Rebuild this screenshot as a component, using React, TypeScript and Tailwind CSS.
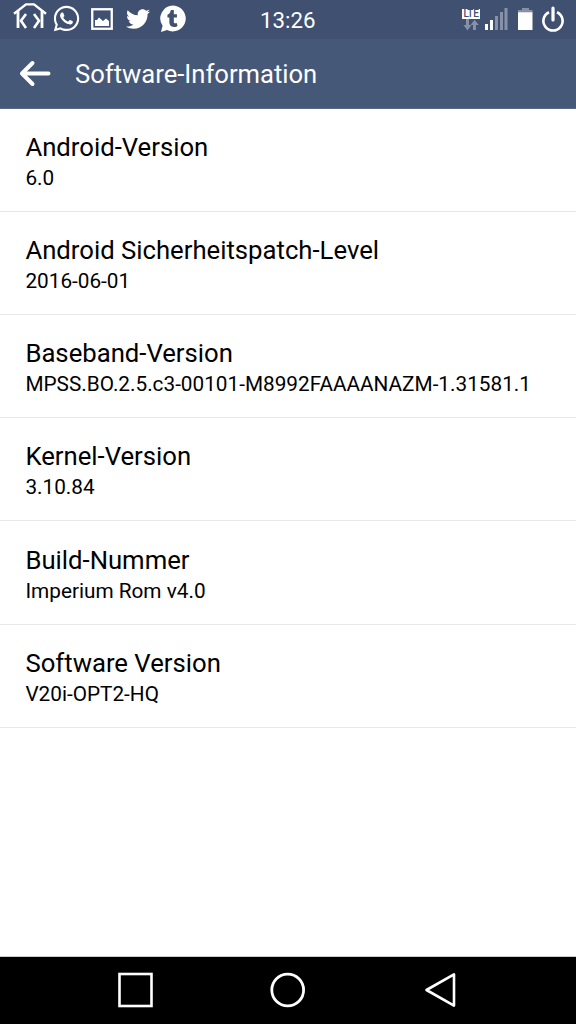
import React from "react";
import { FaTumblr, FaTwitter, FaWhatsapp } from "react-icons/fa";

const infoItems = [
    { title: "Android-Version", value: "6.0", size: "h-[103px] pt-[22px]" },
    { title: "Android Sicherheitspatch-Level", value: "2016-06-01", size: "h-[103px] pt-[22px]" },
    { title: "Baseband-Version", value: "MPSS.BO.2.5.c3-00101-M8992FAAAANAZM-1.31581.1", size: "h-[103px] pt-[22px]" },
    { title: "Kernel-Version", value: "3.10.84", size: "h-[103px] pt-[22px]" },
    { title: "Build-Nummer", value: "Imperium Rom v4.0", size: "h-[104px] pt-[23px]" },
    { title: "Software Version", value: "V20i-OPT2-HQ", size: "h-[103px] pt-[22px]" },
];

const HouseIcon = () => (
    <svg width="34" height="28" viewBox="0 0 34 28" fill="none" stroke="currentColor" strokeWidth="2.4">
        <path d="M1 11.8 L13 2.4 H21 L33 11.8" />
        <path d="M5 9 V26 M29 9 V26" strokeWidth="2.8" />
        <path d="M13 12 L8 18.8 L13 26 M21 12 L26 18.8 L21 26" strokeWidth="2.6" />
    </svg>
);

const PictureIcon = () => (
    <svg width="22" height="22" viewBox="0 0 22 22">
        <rect x="1.25" y="1.25" width="19.5" height="19.5" fill="none" stroke="currentColor" strokeWidth="2.3" />
        <path d="M4 18 V12 L6 12 L8 9.5 L12 13 L15 10.5 L18 13 V18 Z" fill="currentColor" />
    </svg>
);

const BubbleIcon = () => (
    <div className="relative h-7 w-7">
        <svg width="28" height="28" viewBox="0 0 28 28" fill="currentColor">
            <path d="M14.2 0.6 A12.9 12.9 0 1 1 8 25 L2 27 L3.6 20.8 A12.9 12.9 0 0 1 14.2 0.6 Z" />
        </svg>
        <FaTumblr size={17} className="absolute top-[5px] left-[5px] text-[#405070]" />
    </div>
);

const LteIcon = () => (
    <div className="flex w-[18px] flex-col items-center">
        <div className="flex h-[10px] w-[18px] items-center justify-center bg-white font-['Roboto',sans-serif] text-[10px] leading-[10px] font-medium tracking-[-0.3px] text-[#405070]">
            LTE
        </div>
        <svg width="18" height="12" viewBox="0 0 18 12" fill="#8691a8">
            <path d="M4 0 H7 V6 H9.5 L5.5 11.5 L1.5 6 H4 Z" />
            <path d="M11 11 H14 V6 H16.8 L12.5 0.8 L8.6 6 H11 Z" />
        </svg>
    </div>
);

const SignalIcon = () => (
    <svg width="23" height="22" viewBox="0 0 23 22">
        <path d="M0 16 H3 V22 H0 Z M5 12 H8 V22 H5 Z" fill="#fff" />
        <path d="M10 8 H13 V22 H10 Z M15 4 H18 V22 H15 Z M19.5 0 H22.5 V22 H19.5 Z" fill="#8691a8" />
    </svg>
);

const BatteryIcon = () => (
    <svg width="15" height="22" viewBox="0 0 15 22">
        <path d="M4 0 H11 V2 H14.5 V5 H0 V2 H4 Z" fill="#8691a8" />
        <path d="M0 4.3 H14.5 V22 H0 Z" fill="#fff" />
    </svg>
);

const PowerIcon = () => (
    <svg width="24" height="28" viewBox="0 0 24 28" fill="none" stroke="currentColor">
        <path d="M8 7.2 A9.6 9.6 0 1 0 16 7.2" strokeWidth="2.6" />
        <path d="M12 3 V15" strokeWidth="3.2" strokeLinecap="round" />
    </svg>
);

const StatusBar = () => (
    <div className="flex h-[39px] bg-[#405070] text-white">
        <div className="flex w-[260px] items-start pl-[13px]">
            <div className="pt-[2px]"><HouseIcon /></div>
            <FaWhatsapp size={29} className="mt-[4px] ml-[5px]" />
            <div className="mt-[8px] ml-[10px]"><PictureIcon /></div>
            <FaTwitter size={24} className="mt-[7px] ml-[13px]" />
            <div className="mt-[5px] ml-[9px]"><BubbleIcon /></div>
        </div>
        <span className="w-[202px] text-[22.3px] leading-[40px]">13:26</span>
        <div className="flex items-start">
            <div className="mt-[9px]"><LteIcon /></div>
            <div className="mt-[8px] ml-[5px]"><SignalIcon /></div>
            <div className="mt-[8px] ml-[10px]"><BatteryIcon /></div>
            <div className="mt-[5px] ml-[8px]"><PowerIcon /></div>
        </div>
    </div>
);

const Header = () => (
    <header className="flex h-[70px] items-center border-b border-[#566787] bg-[#465878] pl-[19px] text-white">
        <svg width="33" height="28" viewBox="0 0 33 28" fill="none" stroke="currentColor" strokeWidth="4" strokeLinecap="round" strokeLinejoin="round">
            <path d="M13.5 3 L3 13.5 L13.5 24 M3 13.5 H29.5" />
        </svg>
        <h1 className="ml-[23px] text-[25.6px] leading-[30px]">Software-Information</h1>
    </header>
);

const NavBar = () => (
    <nav className="flex h-[68px] items-center border-t border-[#c8cccc] bg-black pb-[2px] text-white">
        <svg className="ml-[117px]" width="36" height="36" viewBox="0 0 36 36" fill="none" stroke="currentColor" strokeWidth="2.6">
            <rect x="2.5" y="2" width="32" height="32" />
        </svg>
        <svg className="ml-[117px]" width="36" height="36" viewBox="0 0 36 36" fill="none" stroke="currentColor" strokeWidth="2.8">
            <circle cx="17.7" cy="18" r="15.9" />
        </svg>
        <svg className="ml-[117px]" width="36" height="36" viewBox="0 0 36 36" fill="none" stroke="currentColor" strokeWidth="2.6" strokeLinejoin="round">
            <path d="M3.5 18 L31 2.4 V33.6 Z" />
        </svg>
    </nav>
);

const App: React.FC = () => {
    return (
        <div className="flex h-[1024px] w-[576px] flex-col bg-white font-['Roboto',sans-serif]">
            <StatusBar />
            <Header />

            <ul className="flex-1">
                {infoItems.map((item) => (
                    <li key={item.title} className={`${item.size} border-b border-[#e8e8e8] pl-[25.4px] text-black`}>
                        <p className="text-[25.7px] leading-[32px]">{item.title}</p>
                        <p className="pt-px text-[20.75px] leading-[29px] whitespace-nowrap">{item.value}</p>
                    </li>
                ))}
            </ul>

            <NavBar />
        </div>
    );
};

export default App;
